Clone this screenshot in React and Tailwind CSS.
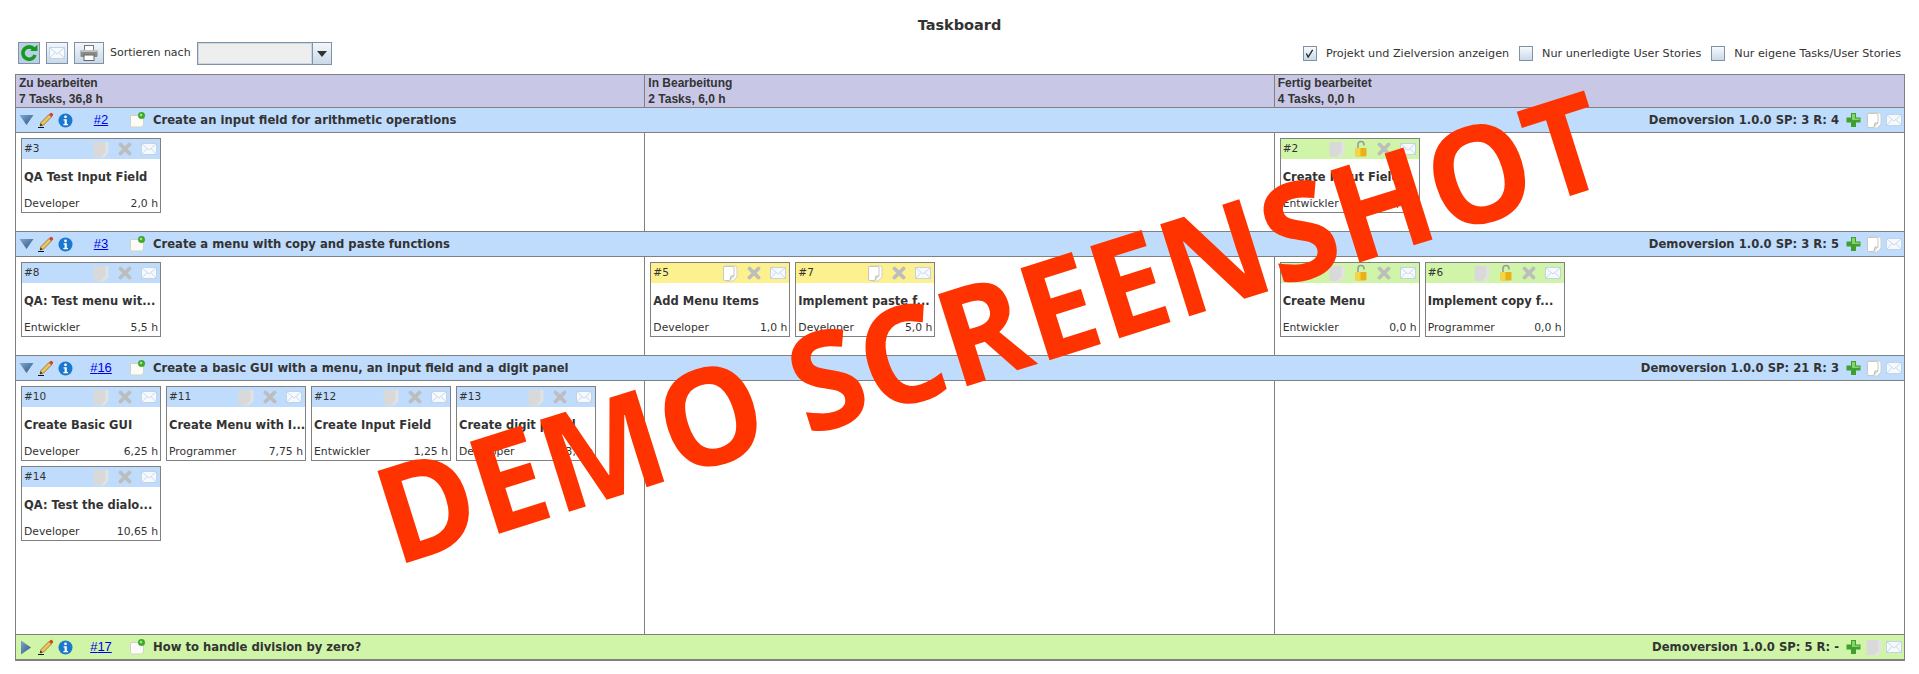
import React from "react";

const MailIcon = ({ cls = "w-[16px] h-[12px]" }) => (
  <svg viewBox="0 0 16 12" className={cls}>
    <rect x="0.5" y="0.5" width="15" height="11" fill="#f6f9fd" stroke="#c3d3e6" />
    <path d="M1 1 L8 7 L15 1 M1 11 L6 5.5 M15 11 L10 5.5" fill="none" stroke="#c9d8ea" />
  </svg>
);

const NoteIcon = ({ gray }) => (
  <svg viewBox="0 0 16 17" className="w-[16px] h-[17px]">
    {gray ? (
      <>
        <path d="M4 1 H14 Q15.5 1 15.5 3 V12 L11 16.5 H5 Q4 16.5 4 15 Z" fill="#e2e2e2" />
        <path d="M0.5 1 H11 Q12.5 1 12.5 2.5 V11 L8 16 H2 Q0.5 16 0.5 14.5 Z" fill="#d9d9d9" />
      </>
    ) : (
      <>
        <path d="M3 1 H13 Q15 1 15 3 V12 L11 16 H5 Q3 16 3 14 Z" fill="#fff" stroke="#cfcfc8" />
        <path d="M1.5 1.5 H11 Q12 1.5 12 3 V11 L8 15.5 H3 Q1.5 15.5 1.5 14 Z" fill="#fff" stroke="#c8c8c0" />
        <path d="M8 15 L9 11 L12 11" fill="#e4e4e0" stroke="#bdbdb5" />
      </>
    )}
  </svg>
);

const XIcon = () => (
  <svg viewBox="0 0 14 14" className="w-[14px] h-[14px]">
    <path d="M2.5 2.5 L11.5 11.5 M11.5 2.5 L2.5 11.5" stroke="#bdbdbd" strokeWidth="3.8" strokeLinecap="round" />
  </svg>
);

const LockIcon = () => (
  <svg viewBox="0 0 14 18" className="w-[14px] h-[18px]">
    <path d="M4 8 V4.5 Q4 1.5 7 1.5 Q10 1.5 10 4.5 V5.5" fill="none" stroke="#9a9a9a" strokeWidth="1.6" />
    <rect x="1.5" y="8" width="11" height="8.5" rx="1" fill="#e8b118" />
    <rect x="1.5" y="8" width="5" height="8.5" fill="#f5d548" />
  </svg>
);

const Triangle = ({ open }) => (
  <svg viewBox="0 0 15 15" className="w-[15px] h-[15px]">
    <defs>
      <linearGradient id="tri" x1="0" y1="0" x2="1" y2="1">
        <stop offset="0" stopColor="#7fa6cc" />
        <stop offset="1" stopColor="#2f5684" />
      </linearGradient>
    </defs>
    {open ? <path d="M0.5 2 H14.5 L7.5 12 Z" fill="url(#tri)" /> : <path d="M2 0.5 L12 7.5 L2 14.5 Z" fill="url(#tri)" />}
  </svg>
);

const Pencil = () => (
  <svg viewBox="0 0 16 16" className="w-[16px] h-[16px]">
    <path d="M0 15.5 H6" stroke="#111" strokeWidth="1" />
    <path d="M2 14 L3 10.5 L11 2.5 L13.5 5 L5.5 13 Z" fill="#f2c35a" stroke="#7a5a20" strokeWidth="0.7" />
    <path d="M11 2.5 L12.5 1 Q13.5 0.5 14.5 1.5 Q15.5 2.5 15 3.5 L13.5 5 Z" fill="#d8402c" />
    <path d="M2 14 L2.7 11.5 L4.5 13.3 Z" fill="#222" />
  </svg>
);

const Info = () => (
  <svg viewBox="0 0 15 15" className="w-[15px] h-[15px]">
    <circle cx="7.5" cy="7.5" r="7" fill="#1a78d0" />
    <circle cx="7.5" cy="3.8" r="1.4" fill="#fff" />
    <path d="M5.6 6.2 H8.8 V11 H10 V12.2 H5.4 V11 H6.6 V7.4 H5.6 Z" fill="#fff" />
  </svg>
);

const NewNote = () => (
  <svg viewBox="0 0 17 16" className="w-[17px] h-[16px]">
    <path d="M1.5 3.5 H14.5 V13 L12.5 15 H3 Q1.5 15 1.5 13.5 Z" fill="#fbfbf8" stroke="#d2d2c8" />
    <circle cx="12.5" cy="3.5" r="3.2" fill="#3fae2a" stroke="#2a8a1c" strokeWidth="0.5" />
    <circle cx="12" cy="3" r="1.2" fill="#a6e88c" />
  </svg>
);

const Plus = () => (
  <svg viewBox="0 0 15 16" className="w-[15px] h-[16px]">
    <path d="M5 1 H10 V5.5 H14.5 V10.5 H10 V15 H5 V10.5 H0.5 V5.5 H5 Z" fill="#3f9f2f" />
    <path d="M6 2 H9 V6.5 H13.5 V8 H6 Z" fill="#86d36a" />
  </svg>
);

const Refresh = () => (
  <svg viewBox="0 0 18 18" className="w-[18px] h-[18px]">
    <path d="M14 5.2 A6.2 6.2 0 1 0 15 11" fill="none" stroke="#169a1e" strokeWidth="3.6" />
    <path d="M10 7 H17.5 V0.8 Z" fill="#169a1e" />
  </svg>
);

const Printer = () => (
  <svg viewBox="0 0 18 16" className="w-[18px] h-[16px]">
    <rect x="4.5" y="0.5" width="9" height="5" fill="#fff" stroke="#777" />
    <rect x="0.5" y="5" width="17" height="7" rx="1" fill="#8b8b8b" />
    <rect x="0.5" y="5" width="17" height="2" fill="#c2c2c2" />
    <rect x="4" y="10" width="10" height="5.5" fill="#fff" stroke="#666" />
  </svg>
);

const CheckBox = ({ checked, label }) => (
  <div className="flex items-center gap-[9px]">
    <span className="flex items-center justify-center w-[14px] h-[15px] border border-[#8192a6] bg-gradient-to-b from-[#f7fafd] to-[#c9d9ea]">
      {checked && (
        <svg viewBox="0 0 10 10" className="w-[9px] h-[9px]">
          <path d="M1.5 5 L3.5 9 L8.5 1" fill="none" stroke="#222" strokeWidth="1.4" />
        </svg>
      )}
    </span>
    <span>{label}</span>
  </div>
);

const HEAD_COLORS = {
  blue: "bg-[#bfdcfd]",
  yellow: "bg-[#fdf08f]",
  green: "bg-[#d0f5a9]",
};

function Card({ id, title, who, time, color = "blue" }) {
  return (
    <div className="w-[140px] h-[75px] border border-[#808080] bg-white flex flex-col">
      <div className={`h-[20px] flex items-center pl-[2px] pr-[3px] ${HEAD_COLORS[color]}`}>
        <span className="text-[10.5px] mr-auto">#{id}</span>
        <div className="flex items-center gap-[9px]">
          <NoteIcon gray={color !== "yellow"} />
          {color === "green" && <LockIcon />}
          <XIcon />
          <MailIcon />
        </div>
      </div>
      <div className="flex-1 flex flex-col justify-between pl-[2px] pr-[2px] pt-[10px]">
        <div className="text-[11.5px] font-bold whitespace-nowrap">{title}</div>
        <div className="flex justify-between text-[10.8px]">
          <span>{who}</span>
          <span>{time}</span>
        </div>
      </div>
    </div>
  );
}

function Story({ num, title, meta, color = "bg-[#bfdcfd]", open = true, noteGray }) {
  return (
    <div className={`h-[25px] flex items-center pl-[3px] pr-[2px] border-b border-[#808080] ${color}`}>
      <Triangle open={open} />
      <span className="w-[4px]" />
      <Pencil />
      <span className="w-[4px]" />
      <Info />
      <span className="w-[56px] text-center font-['Liberation_Sans',sans-serif] text-[13px] text-[#0000ee] underline">#{num}</span>
      <NewNote />
      <span className="ml-[7px] mt-[1px] text-[11.6px] font-bold">{title}</span>
      <span className="ml-auto mt-[1px] text-[11.6px] font-bold">{meta}</span>
      <span className="ml-[7px]"><Plus /></span>
      <span className="ml-[5px]"><NoteIcon gray={noteGray} /></span>
      <span className="ml-[4px]"><MailIcon /></span>
    </div>
  );
}

function Row({ height, cols }) {
  return (
    <div className={`grid grid-cols-3 border-b border-[#808080] ${height}`}>
      {cols.map((cards, i) => (
        <div key={i} className={`flex flex-wrap content-start gap-[5px] pl-[5px] pt-[5px] ${i < 2 ? "border-r border-[#808080]" : ""}`}>
          {cards.map((c) => (
            <Card key={c.id} {...c} />
          ))}
        </div>
      ))}
    </div>
  );
}

export default function App() {
  return (
    <div className="relative h-[674px] overflow-hidden bg-white font-['DejaVu_Sans',sans-serif] text-[#333]">
      <h1 className="pt-[15px] h-[42px] text-center text-[14.5px] font-bold">Taskboard</h1>

      {/* toolbar */}
      <div className="h-[32px] flex justify-between pl-[18px] pr-[18px] text-[11px]">
        <div className="flex items-start gap-[6px]">
          <button className="w-[22px] h-[22px] flex items-center justify-center border border-[#8192a6] bg-[#b9cfe6]">
            <Refresh />
          </button>
          <button className="w-[22px] h-[22px] flex items-center justify-center border border-[#8192a6] bg-gradient-to-b from-[#f3f7fb] to-[#c9d9e9]">
            <MailIcon />
          </button>
          <button className="w-[30px] h-[22px] flex items-center justify-center border border-[#8192a6] bg-gradient-to-b from-[#f3f7fb] to-[#c9d9e9]">
            <Printer />
          </button>
          <span className="leading-[22px]">Sortieren nach</span>
          <div className="w-[135px] h-[23px] flex border border-[#8192a6]">
            <div className="flex-1 bg-[#eeeeee] border border-[#c9d6e4]" />
            <div className="w-[19px] flex items-center justify-center border-l border-[#8192a6] bg-gradient-to-b from-[#f3f7fb] to-[#c9d9e9]">
              <svg viewBox="0 0 10 6" className="w-[10px] h-[6px]"><path d="M0 0 H10 L5 6 Z" fill="#333" /></svg>
            </div>
          </div>
        </div>
        <div className="flex items-center h-[24px] gap-[10px] text-[11.2px]">
          <CheckBox checked label="Projekt und Zielversion anzeigen" />
          <CheckBox label="Nur unerledigte User Stories" />
          <CheckBox label="Nur eigene Tasks/User Stories" />
        </div>
      </div>

      {/* board */}
      <div className="ml-[15px] w-[1890px] border border-[#808080]">
        <div className="grid grid-cols-3 h-[33px] bg-[#c8c8e6] border-b border-[#808080] font-['Liberation_Sans',sans-serif] text-[12px] font-bold leading-[16px]">
          <div className="pl-[3px] border-r border-[#808080]">Zu bearbeiten<br />7 Tasks, 36,8 h</div>
          <div className="pl-[3px] border-r border-[#808080]">In Bearbeitung<br />2 Tasks, 6,0 h</div>
          <div className="pl-[3px]">Fertig bearbeitet<br />4 Tasks, 0,0 h</div>
        </div>

        <Story num="2" title="Create an input field for arithmetic operations" meta="Demoversion 1.0.0 SP: 3 R: 4" />
        <Row
          height="h-[99px]"
          cols={[
            [{ id: 3, title: "QA Test Input Field", who: "Developer", time: "2,0 h" }],
            [],
            [{ id: 2, title: "Create Input Field", who: "Entwickler", time: "0,0 h", color: "green" }],
          ]}
        />

        <Story num="3" title="Create a menu with copy and paste functions" meta="Demoversion 1.0.0 SP: 3 R: 5" />
        <Row
          height="h-[99px]"
          cols={[
            [{ id: 8, title: "QA: Test menu wit...", who: "Entwickler", time: "5,5 h" }],
            [
              { id: 5, title: "Add Menu Items", who: "Developer", time: "1,0 h", color: "yellow" },
              { id: 7, title: "Implement paste f...", who: "Developer", time: "5,0 h", color: "yellow" },
            ],
            [
              { id: 4, title: "Create Menu", who: "Entwickler", time: "0,0 h", color: "green" },
              { id: 6, title: "Implement copy f...", who: "Programmer", time: "0,0 h", color: "green" },
            ],
          ]}
        />

        <Story num="16" title="Create a basic GUI with a menu, an input field and a digit panel" meta="Demoversion 1.0.0 SP: 21 R: 3" />
        <Row
          height="h-[254px]"
          cols={[
            [
              { id: 10, title: "Create Basic GUI", who: "Developer", time: "6,25 h" },
              { id: 11, title: "Create Menu with I...", who: "Programmer", time: "7,75 h" },
              { id: 12, title: "Create Input Field", who: "Entwickler", time: "1,25 h" },
              { id: 13, title: "Create digit panel", who: "Developer", time: "3,4 h" },
              { id: 14, title: "QA: Test the dialo...", who: "Developer", time: "10,65 h" },
            ],
            [],
            [],
          ]}
        />

        <Story num="17" title="How to handle division by zero?" meta="Demoversion 1.0.0 SP: 5 R: -" color="bg-[#d0f5a9]" open={false} noteGray />
      </div>

      {/* watermark */}
      <div className="absolute left-[990px] top-[325px] -translate-x-1/2 -translate-y-1/2 -rotate-[17.5deg] scale-x-[0.97] whitespace-nowrap font-['Open_Sans',sans-serif] font-bold text-[135px] leading-none text-[#ff3300]">
        DEMO SCREENSHOT
      </div>
    </div>
  );
}
